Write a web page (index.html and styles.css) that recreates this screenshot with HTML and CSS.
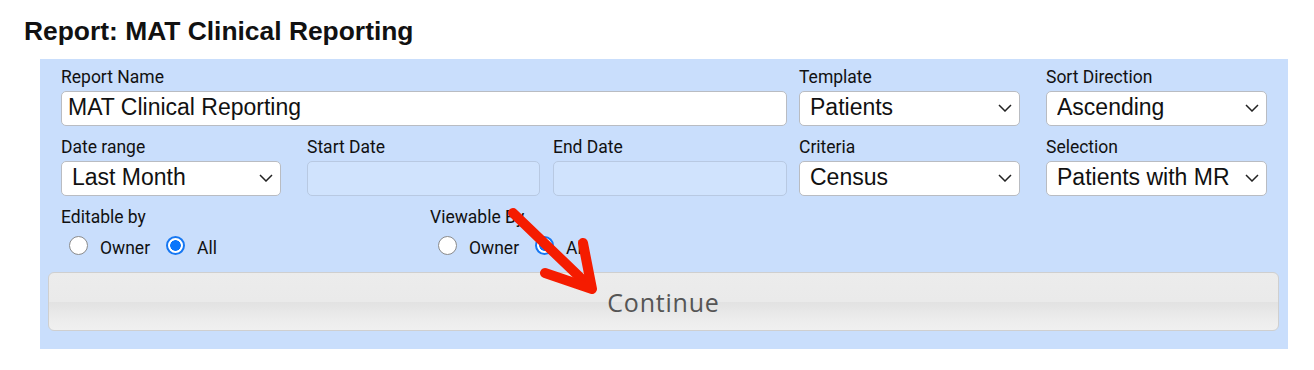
FILE: index.html
```html
<!DOCTYPE html>
<html lang="en">
<head>
    <meta charset="UTF-8">
    <title>Report: MAT Clinical Reporting</title>
    <link rel="stylesheet" href="styles.css">
</head>
<body>
    <h1 class="page-title">Report: MAT Clinical Reporting</h1>

    <form class="report-panel">
        <div class="field-grid">
            <div class="field span-3">
                <label class="field-label">Report Name</label>
                <input class="text-input" type="text" value="MAT Clinical Reporting">
            </div>
            <div class="field">
                <label class="field-label">Template</label>
                <div class="select-wrap w-221">
                    <select class="select-input"><option>Patients</option></select>
                    <svg class="chevron" viewBox="0 0 14 8"><path d="M1 1 L7 7 L13 1"/></svg>
                </div>
            </div>
            <div class="field">
                <label class="field-label">Sort Direction</label>
                <div class="select-wrap w-221">
                    <select class="select-input"><option>Ascending</option></select>
                    <svg class="chevron" viewBox="0 0 14 8"><path d="M1 1 L7 7 L13 1"/></svg>
                </div>
            </div>

            <div class="field">
                <label class="field-label">Date range</label>
                <div class="select-wrap w-220">
                    <select class="select-input"><option>Last Month</option></select>
                    <svg class="chevron" viewBox="0 0 14 8"><path d="M1 1 L7 7 L13 1"/></svg>
                </div>
            </div>
            <div class="field">
                <label class="field-label">Start Date</label>
                <input class="text-input w-233" type="text" disabled>
            </div>
            <div class="field">
                <label class="field-label">End Date</label>
                <input class="text-input w-234" type="text" disabled>
            </div>
            <div class="field">
                <label class="field-label">Criteria</label>
                <div class="select-wrap w-221">
                    <select class="select-input"><option>Census</option></select>
                    <svg class="chevron" viewBox="0 0 14 8"><path d="M1 1 L7 7 L13 1"/></svg>
                </div>
            </div>
            <div class="field">
                <label class="field-label">Selection</label>
                <div class="select-wrap w-221">
                    <select class="select-input"><option>Patients with MR</option></select>
                    <svg class="chevron" viewBox="0 0 14 8"><path d="M1 1 L7 7 L13 1"/></svg>
                </div>
            </div>
        </div>

        <div class="access-row">
            <div class="access-group">
                <div class="field-label">Editable by</div>
                <div class="radio-row">
                    <label class="radio-item"><input type="radio" name="edit"><span>Owner</span></label>
                    <label class="radio-item"><input type="radio" name="edit" checked><span>All</span></label>
                </div>
            </div>
            <div class="access-group">
                <div class="field-label">Viewable By</div>
                <div class="radio-row">
                    <label class="radio-item"><input type="radio" name="view"><span>Owner</span></label>
                    <label class="radio-item"><input type="radio" name="view" checked><span>All</span></label>
                </div>
            </div>
        </div>

        <button class="continue-btn" type="button">Continue</button>

        <!-- annotation arrow -->
        <svg class="annotation" width="1314" height="370" viewBox="0 0 1314 370">
            <g fill="none" stroke="#f51c00" stroke-width="10" stroke-linecap="round" stroke-linejoin="round">
                <path d="M513 213 L589 286"/>
                <path d="M545 273 L592 289 L583 243"/>
            </g>
        </svg>
    </form>
</body>
</html>
```

FILE: styles.css
```css
* {
    box-sizing: border-box;
}

html, body {
    margin: 0;
    padding: 0;
    background: #fff;
    font-family: Roboto, "Liberation Sans", sans-serif;
    color: #111;
}

.page-title {
    margin: 0;
    padding: 16px 0 0 24px;
    height: 59px;
    font-family: "Liberation Sans", Arial, sans-serif;
    font-size: 26.4px;
    line-height: 30px;
    font-weight: bold;
}

.report-panel {
    position: relative;
    width: 1248px;
    margin-left: 40px;
    padding: 7px 9px 18px 8px;
    background: #c9defc;
}

.field-grid {
    display: grid;
    grid-template-columns: 246px 246px 246px 247px 221px;
    row-gap: 10px;
    padding-left: 13px;
}

.field {
    display: flex;
    flex-direction: column;
}

.span-3 {
    grid-column: span 3;
}

.field-label {
    font-size: 17.5px;
    line-height: 22px;
    height: 22px;
    margin-bottom: 3px;
    color: #111;
}

.text-input,
.select-input {
    height: 35px;
    border: 1px solid #b9bcc2;
    border-radius: 5px;
    background: #fff;
    font-family: "Liberation Sans", Arial, sans-serif;
    font-size: 23px;
    color: #111;
    outline: none;
}

.text-input {
    width: 726px;
    padding: 0 6px 2px;
}

.text-input:disabled {
    background: #d0e3fd;
    border-color: #b8c9e2;
}

.w-220 { width: 220px; }
.w-221 { width: 221px; }
.w-233 { width: 233px !important; }
.w-234 { width: 234px !important; }

.select-wrap {
    position: relative;
}

.select-input {
    width: 100%;
    padding: 0 30px 3px 10px;
    -webkit-appearance: none;
    appearance: none;
}

.chevron {
    position: absolute;
    right: 8px;
    top: 13px;
    width: 14px;
    height: 8px;
    fill: none;
    stroke: #222;
    stroke-width: 1.5;
    pointer-events: none;
}

.access-row {
    display: flex;
    padding-left: 13px;
    margin-top: 10px;
}

.access-group {
    width: 369px;
}

.access-group .field-label {
    margin-bottom: 6px;
}

.radio-row {
    display: flex;
    align-items: center;
    gap: 16px;
    padding-left: 8px;
    height: 22px;
}

.radio-item {
    display: flex;
    align-items: center;
    gap: 12px;
    font-size: 17.5px;
}

.radio-item span {
    padding-top: 5px;
}

.radio-item input {
    -webkit-appearance: none;
    appearance: none;
    width: 19px;
    height: 19px;
    margin: 0;
    border: 1px solid #8b8b8b;
    border-radius: 50%;
    background: #fff;
}

.radio-item input:checked {
    border: 2px solid #1677f2;
    background: radial-gradient(circle, #0a76fb 0 5px, #fff 5.6px);
}

.continue-btn {
    display: block;
    width: 1231px;
    height: 59px;
    margin-top: 16px;
    border: 1px solid #cfcfcf;
    border-radius: 6px;
    background: linear-gradient(#ececec 0%, #eaeaea 50%, #e2e2e2 51%, #ececec 80%, #f0f0f0 100%);
    font-family: "Open Sans", "DejaVu Sans", sans-serif;
    font-size: 25px;
    letter-spacing: 0.8px;
    color: #555;
    padding-top: 2px;
}

.annotation {
    position: absolute;
    left: -40px;
    top: -59px;
    pointer-events: none;
}
```
